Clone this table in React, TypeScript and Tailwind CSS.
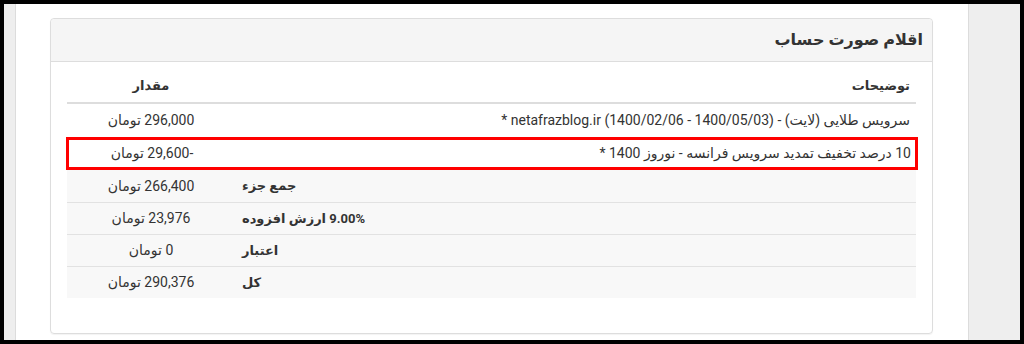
import React from "react";

interface ItemRow {
  description: string;
  amount: string;
  highlight?: boolean;
}

interface TotalRow {
  label: string;
  amount: string;
}

const items: ItemRow[] = [
  {
    description: "سرویس طلایی (لایت) - (1400/05/03 - 1400/02/06) netafrazblog.ir *",
    amount: "296,000 تومان",
  },
  {
    description: "10 درصد تخفیف تمدید سرویس فرانسه - نوروز 1400 *",
    amount: "-29,600 تومان",
    highlight: true,
  },
];

const totals: TotalRow[] = [
  { label: "جمع جزء", amount: "266,400 تومان" },
  { label: "9.00% ارزش افزوده", amount: "23,976 تومان" },
  { label: "اعتبار", amount: "0 تومان" },
  { label: "کل", amount: "290,376 تومان" },
];

export default function App() {
  return (
    <div
      className="w-[1024px] h-[344px] bg-black p-[4px] text-[#333]"
      style={{ fontFamily: "Roboto, 'DejaVu Sans', sans-serif" }}
    >
      <div className="flex h-full bg-white">
        {/* left edge of the page */}
        <div className="w-[12px] bg-[#eeeeee] border-r border-[#dcdcdc]" />

        <div className="flex-1 pl-[34px] pr-[35px] pt-[14px]">
          <div dir="rtl" className="border border-[#dddddd] rounded-[4px] shadow-[0_1px_1px_rgba(0,0,0,0.05)]">
            <div className="h-[43px] bg-[#f5f5f5] border-b border-[#dddddd] rounded-t-[4px] flex items-center px-[9px]">
              <h3 className="text-[16px] font-bold text-[#333]">اقلام صورت حساب</h3>
            </div>

            <div className="px-[16px] pt-[8px] pb-[35px] text-[14px]">
              {/* head */}
              <div className="grid grid-cols-[1fr_168px] h-[34px] items-center border-b-2 border-[#dddddd] font-bold text-[13px]">
                <div className="pr-[6px]">توضیحات</div>
                <div className="text-center">مقدار</div>
              </div>

              {items.map((row) =>
                row.highlight ? (
                  <div
                    key={row.description}
                    className="grid grid-cols-[1fr_168px] h-[33px] items-center border-[3px] border-[#ff0000] -ml-[1px] -mr-[2px] bg-white"
                  >
                    <div className="pr-[4px]">{row.description}</div>
                    <div className="text-center -ml-[2px]">{row.amount}</div>
                  </div>
                ) : (
                  <div
                    key={row.description}
                    className="grid grid-cols-[1fr_168px] h-[33px] items-center bg-white"
                  >
                    <div className="pr-[6px]">{row.description}</div>
                    <div className="text-center">{row.amount}</div>
                  </div>
                )
              )}

              {totals.map((row, i) => (
                <div
                  key={row.label}
                  className={
                    i === 0
                      ? "grid grid-cols-[1fr_168px] h-[32px] items-center bg-[#f8f8f8]"
                      : "grid grid-cols-[1fr_168px] h-[32px] items-center bg-[#f8f8f8] border-t border-[#e2e2e2]"
                  }
                >
                  <div className="text-left pl-[7px] font-bold text-[13px]">{row.label}</div>
                  <div className="text-center">{row.amount}</div>
                </div>
              ))}
            </div>
          </div>
        </div>

        {/* right side column */}
        <div className="w-[52px] bg-[#eeeeee] border-l border-[#dcdcdc]" />
      </div>
    </div>
  );
}
